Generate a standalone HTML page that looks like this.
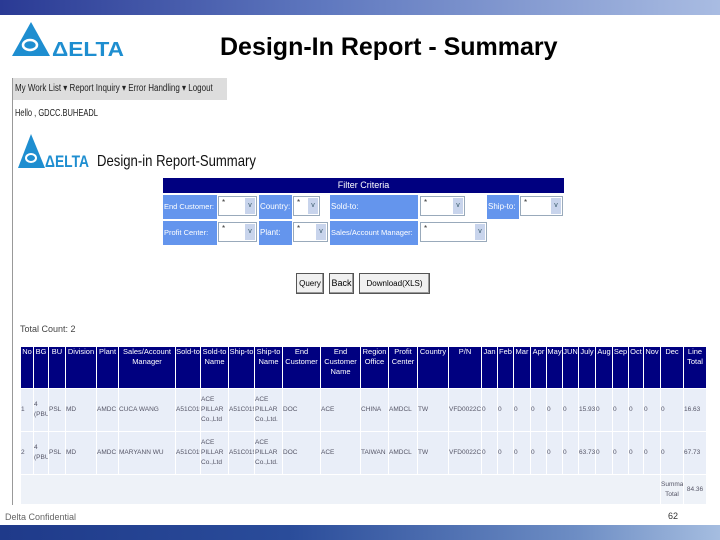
<!DOCTYPE html>
<html><head><meta charset="utf-8"><style>
*{margin:0;padding:0;box-sizing:border-box}
body{width:720px;height:540px;position:relative;background:#fff;font-family:"Liberation Sans",sans-serif;overflow:hidden}
.a{position:absolute}
.topbar{left:0;top:0;width:720px;height:15px;background:linear-gradient(90deg,#2a3a94,#5f78bf 45%,#a9bce2)}
.botbar{left:0;top:525px;width:720px;height:15px;background:linear-gradient(90deg,#1f3a8a,#2a4c9a 40%,#6d8dc4 80%,#a5bde0)}
.sm{font-size:9px;line-height:10px;transform-origin:0 0}
.lab{position:absolute;background:#6495ed;color:#fff;font-size:8px;padding-left:1px;white-space:nowrap;overflow:hidden;line-height:24px}
.selbox{position:absolute;border:1px solid #9ab;height:20px;background:#fff;color:#333;font-size:8px;padding-left:3px;line-height:12px}
.selbox i{position:absolute;right:1px;top:1px;width:10px;height:16px;background:#c8d4ec;color:#356;font-size:7px;font-style:normal;text-align:center;line-height:16px}
.btn{position:absolute;top:273px;height:21px;border:1px solid #555;background:#f0f0f0;font-size:9px;text-align:center;line-height:19px;box-shadow:inset -1px -1px #999;white-space:nowrap;overflow:hidden}
.d{position:absolute;left:20px;top:346px;width:686px;table-layout:fixed;border-collapse:collapse}
.d td{font-size:7px;line-height:10px;border:1px solid #fff;text-align:center;padding:0;overflow:hidden}
.d tr.h td{background:#000080;color:#fff;vertical-align:top;font-size:7.5px;height:42px}
.d tr.r td{background:#e9eef8;color:#556;height:43px;text-align:left;font-size:6.5px}
.d tr.s td{background:#eef2f8;height:30px;color:#556;font-size:6.5px}
</style></head><body>
<div class="a topbar"></div>
<svg class="a" style="left:10px;top:20px" width="116" height="38" viewBox="0 0 116 38">
<polygon points="21,2 40,36 2,36" fill="#1e8ed0"/>
<ellipse cx="20" cy="25" rx="7" ry="5" fill="none" stroke="#fff" stroke-width="2.5"/>
<text x="42" y="36" font-family="Liberation Sans" font-weight="bold" font-size="20" fill="#1e8ed0" textLength="72" lengthAdjust="spacingAndGlyphs">ΔELTA</text>
</svg>
<div class="a" style="left:220px;top:33px;font-size:25px;font-weight:bold;color:#000;white-space:nowrap">Design-In Report - Summary</div>
<div class="a" style="left:12px;top:78px;width:1px;height:427px;background:#999"></div>
<div class="a" style="left:13px;top:78px;width:214px;height:22px;background:#ddd"></div>
<div class="a sm" style="left:15px;top:84px;font-size:10px;color:#222;white-space:nowrap;transform:scaleX(.8)">My Work List ▾ Report Inquiry ▾ Error Handling ▾ Logout</div>
<div class="a sm" style="left:15px;top:109px;font-size:10px;color:#222;white-space:nowrap;transform:scaleX(.75)">Hello , GDCC.BUHEADL</div>
<svg class="a" style="left:18px;top:132px" width="72" height="38" viewBox="0 0 72 38">
<polygon points="13,2 27,36 0,36" fill="#1e8ed0"/>
<ellipse cx="13" cy="26" rx="5" ry="4" fill="none" stroke="#fff" stroke-width="2"/>
<text x="27" y="35" font-family="Liberation Sans" font-weight="bold" font-size="17" fill="#1e8ed0" textLength="44" lengthAdjust="spacingAndGlyphs">ΔELTA</text>
</svg>
<div class="a" style="left:97px;top:153px;font-size:16px;color:#111;white-space:nowrap;transform:scaleX(.82);transform-origin:0 0">Design-in Report-Summary</div>

<div class="a" style="left:163px;top:178px;width:401px;height:15px;background:#000080;color:#fff;font-size:9px;text-align:center;line-height:15px">Filter Criteria</div>
<div class="lab" style="left:163px;top:195px;width:54px;height:24px;font-size:7.5px">End Customer:</div>
<div class="selbox" style="left:218px;top:196px;width:39px">*<i>v</i></div>
<div class="lab" style="left:259px;top:195px;width:33px;height:24px">Country:</div>
<div class="selbox" style="left:293px;top:196px;width:27px">*<i>v</i></div>
<div class="lab" style="left:330px;top:195px;width:88px;height:24px">Sold-to:</div>
<div class="selbox" style="left:420px;top:196px;width:45px">*<i>v</i></div>
<div class="lab" style="left:487px;top:195px;width:32px;height:24px">Ship-to:</div>
<div class="selbox" style="left:520px;top:196px;width:43px">*<i>v</i></div>
<div class="lab" style="left:163px;top:221px;width:54px;height:24px;font-size:7.5px">Profit Center:</div>
<div class="selbox" style="left:218px;top:222px;width:39px">*<i>v</i></div>
<div class="lab" style="left:259px;top:221px;width:33px;height:24px">Plant:</div>
<div class="selbox" style="left:293px;top:222px;width:35px">*<i>v</i></div>
<div class="lab" style="left:330px;top:221px;width:88px;height:24px;font-size:7.5px">Sales/Account Manager:</div>
<div class="selbox" style="left:420px;top:222px;width:67px">*<i>v</i></div>

<div class="btn" style="left:296px;width:28px;font-size:8px">Query</div>
<div class="btn" style="left:329px;width:25px">Back</div>
<div class="btn" style="left:359px;width:71px;font-size:8px">Download(XLS)</div>

<div class="a" style="left:20px;top:324px;font-size:9px;color:#444">Total Count: 2</div>
<table class="d">
<colgroup><col style="width:13px"><col style="width:15px"><col style="width:17px"><col style="width:31px"><col style="width:22px"><col style="width:57px"><col style="width:25px"><col style="width:28px"><col style="width:26px"><col style="width:28px"><col style="width:38px"><col style="width:40px"><col style="width:28px"><col style="width:29px"><col style="width:31px"><col style="width:33px"><col style="width:16px"><col style="width:16px"><col style="width:17px"><col style="width:16px"><col style="width:16px"><col style="width:16px"><col style="width:17px"><col style="width:17px"><col style="width:16px"><col style="width:15px"><col style="width:17px"><col style="width:23px"><col style="width:23px"></colgroup>
<tr class="h"><td>No</td><td>BG</td><td>BU</td><td>Division</td><td>Plant</td><td>Sales/Account Manager</td><td>Sold-to</td><td>Sold-to Name</td><td>Ship-to</td><td>Ship-to Name</td><td>End Customer</td><td>End Customer Name</td><td>Region Office</td><td>Profit Center</td><td>Country</td><td>P/N</td><td>Jan</td><td>Feb</td><td>Mar</td><td>Apr</td><td>May</td><td>JUN</td><td>July</td><td>Aug</td><td>Sep</td><td>Oct</td><td>Nov</td><td>Dec</td><td>Line Total</td></tr>
<tr class="r"><td>1</td><td>4 (PBU</td><td>PSL</td><td>MD</td><td>AMDC</td><td>CUCA WANG</td><td>A51C019</td><td>ACE PILLAR Co.,Ltd</td><td>A51C019</td><td>ACE PILLAR Co.,Ltd.</td><td>DOC</td><td>ACE</td><td>CHINA</td><td>AMDCL</td><td>TW</td><td>VFD0022CTC</td><td>0</td><td>0</td><td>0</td><td>0</td><td>0</td><td>0</td><td>15.93</td><td>0</td><td>0</td><td>0</td><td>0</td><td>0</td><td>16.63</td></tr>
<tr class="r"><td>2</td><td>4 (PBU</td><td>PSL</td><td>MD</td><td>AMDC</td><td>MARYANN WU</td><td>A51C019</td><td>ACE PILLAR Co.,Ltd</td><td>A51C019</td><td>ACE PILLAR Co.,Ltd.</td><td>DOC</td><td>ACE</td><td>TAIWAN</td><td>AMDCL</td><td>TW</td><td>VFD0022CTC</td><td>0</td><td>0</td><td>0</td><td>0</td><td>0</td><td>0</td><td>63.73</td><td>0</td><td>0</td><td>0</td><td>0</td><td>0</td><td>67.73</td></tr>
<tr class="s"><td colspan="27"></td><td>Summary Total</td><td>84.36</td></tr>
</table>
<div class="a" style="left:5px;top:512px;font-size:9px;color:#666">Delta Confidential</div>
<div class="a" style="left:668px;top:511px;font-size:9px;color:#333">62</div>
<div class="a botbar"></div>
</body></html>
